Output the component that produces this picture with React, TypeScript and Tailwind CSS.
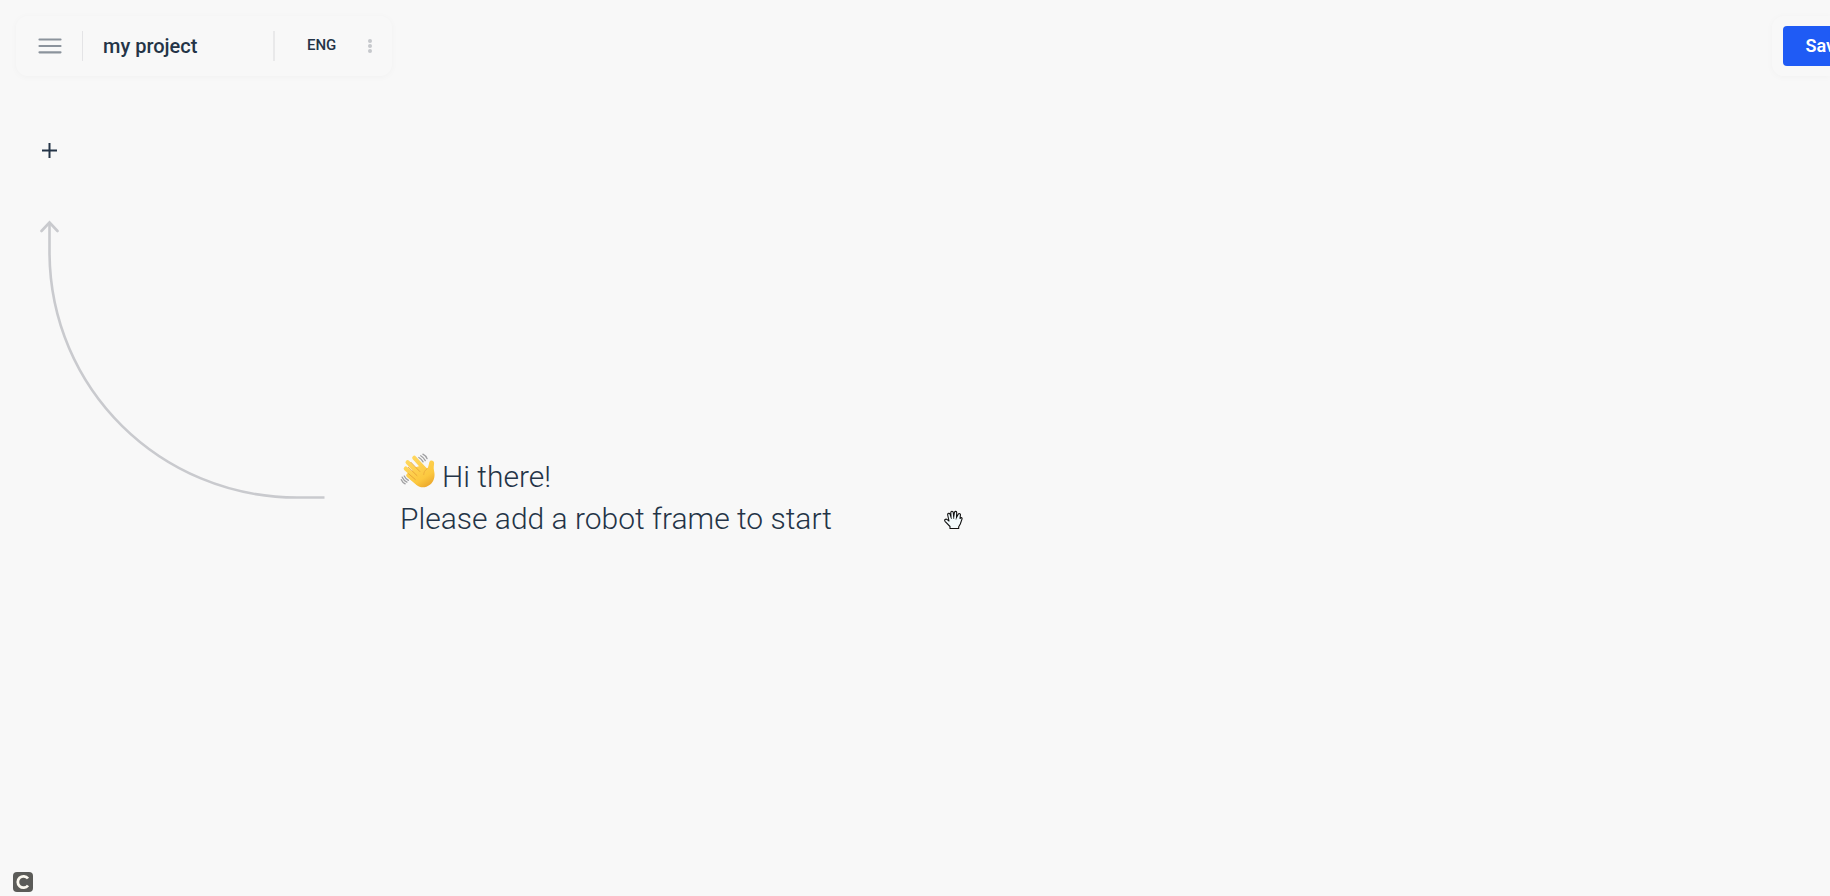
import React from 'react'

function MenuIcon() {
  return (
    <svg className="h-6 w-6" viewBox="0 0 24 24" fill="none" stroke="#8b939c" strokeWidth="2.2" strokeLinecap="round" aria-hidden="true">
      <path d="M1.5 5.5h21M1.5 12h21M1.5 18.3h21" />
    </svg>
  )
}

function DotsIcon() {
  return (
    <svg className="h-4 w-1" viewBox="0 0 4 16" fill="#c6c8cc" aria-hidden="true">
      <circle cx="2" cy="3" r="2" />
      <circle cx="2" cy="8" r="2" />
      <circle cx="2" cy="13" r="2" />
    </svg>
  )
}

function PlusIcon() {
  return (
    <svg className="h-4 w-4" viewBox="0 0 16 16" fill="none" stroke="#243447" strokeWidth="2" aria-hidden="true">
      <path d="M0 8.5h15M7.5 1v15" />
    </svg>
  )
}

function Arrow() {
  return (
    <svg className="h-[280px] w-[285px] shrink-0" viewBox="0 0 285 280" fill="none" stroke="#c9cace" strokeWidth="2.6" aria-hidden="true">
      <path d="M1.5 12L9.5 3.5l8 8.5" strokeLinecap="round" />
      <path d="M9.5 3.5v29C9.5 170 121 278.500 257 278.500h27.500" />
    </svg>
  )
}

function WaveIcon() {
  return (
    <svg className="-mt-3 h-9 w-9" viewBox="0 0 36 36" fill="none" strokeLinecap="round" aria-hidden="true">
      <defs>
        <linearGradient id="skin" x1="10" y1="6" x2="28" y2="34" gradientUnits="userSpaceOnUse">
          <stop stopColor="#ffd75e" />
          <stop offset="0.7" stopColor="#fcc83f" />
          <stop offset="1" stopColor="#eba62c" />
        </linearGradient>
      </defs>
      <path d="M18.800 4.500c1.900 1 3.300 2.500 4.300 4.400M20.700 2.700c2 1.100 3.600 2.800 4.600 4.900M22.900 1.200c1.900 1 3.400 2.600 4.200 4.500M4.200 23c.9 1.900 2.300 3.300 4.200 4.300M2.200 24.200c1 2.200 2.600 3.800 4.700 4.900M1.300 26.700c.8 1.900 2.100 3.200 3.900 4.100" stroke="#a0a0a2" strokeWidth="1.300" />
      <path d="M14.300 4.800L24 15.500M7.600 9.300L19 21M5.800 15.600L17 25.500M8.300 22.300L17 29.500" stroke="url(#skin)" strokeWidth="4.200" />
      <path d="M13 15l10-3c1.500 1.400 3 2.600 4.500 3.400.9-1.700 1.400-3.800 1.700-5.900.5-3.100 5.100-2.500 4.900.5-.1 2.600-.8 5 0 8 1.400 6-.5 11-4.200 13.800-4.200 3.200-9.500 3.500-13.400.2L10 26z" fill="url(#skin)" />
      <path d="M10.900 9.300l8.900 9.200M8.300 14.200l8.700 8.400M8.500 20.700l6.800 5.800" stroke="#e6a134" strokeWidth="0.900" />
      <path d="M27.300 15.600c-2.300 1.500-3.500 3.500-3.600 6" stroke="#eba93a" strokeWidth="0.800" />
    </svg>
  )
}

function HandCursor() {
  return (
    <svg className="absolute left-[944px] top-[510px] h-5 w-[19px]" viewBox="0 0 19 20" fill="#f3fafc" stroke="#111" strokeWidth="1.1" strokeLinejoin="round" aria-hidden="true">
      <path d="M6 18.500v-2L1 11.300c-1-1.500.7-2.800 2.200-1.700L5 11 3.700 5c-.3-1.900 1.800-2.300 2.400-.6L7 7l-.2-4.300c0-1.900 2.300-1.900 2.500 0L9.700 7l.7-4.500c.3-1.700 2.400-1.400 2.300.3L12.500 7.500l1.700-3.200c.8-1.400 2.600-.6 2.200.9L16 8.500c1.400-1.500 2.500-.8 1.900.9L16.300 14l-1.600 2.700v1.800z" />
      <path d="M7 7l.5 2M9.700 7v2M12.500 7.500L12 9.500" fill="none" strokeWidth="0.7" />
    </svg>
  )
}

export default function App() {
  return (
    <div className="relative flex h-screen flex-col overflow-hidden bg-[#f8f8f8] font-[Roboto,sans-serif] text-[#243447]">
      <header className="flex justify-between pl-4 pt-4">
        <div className="flex h-[60px] items-center rounded-xl pl-[22px] pr-5 shadow-[0_1px_7px_rgba(0,0,0,0.03)]">
          <button type="button" aria-label="Menu">
            <MenuIcon />
          </button>
          <div className="ml-5 h-[30px] w-px bg-[#e4e4e6]" />
          <input type="text" aria-label="Project name" defaultValue="my project" className="ml-5 w-[170px] bg-transparent text-xl font-medium outline-none" />
          <div className="h-[30px] w-0.5 bg-[#e9e9ea]" />
          <button type="button" className="ml-8 pb-0.5 text-[15px] font-medium">ENG</button>
          <button type="button" aria-label="More" className="ml-8">
            <DotsIcon />
          </button>
        </div>
        <div className="flex h-[60px] w-[58px] items-center rounded-l-xl pl-[11px] shadow-[0_1px_7px_rgba(0,0,0,0.03)]">
          <button type="button" className="h-10 w-[84px] shrink-0 rounded bg-[#1f5bf5] text-lg font-semibold text-white">Save</button>
        </div>
      </header>

      <main className="flex-1">
        <button type="button" aria-label="Add frame" className="ml-[42px] mt-[66px] block">
          <PlusIcon />
        </button>
        <div className="ml-10 mt-[61px] flex items-end">
          <Arrow />
          <h1 className="-mb-[41px] ml-[75px] text-3xl/[42px] font-light">
            <span className="flex items-center gap-1.5">
              <WaveIcon />
              Hi there!
            </span>
            Please add a robot frame to start
          </h1>
        </div>
      </main>

      <footer className="px-[13px] pb-1">
        <svg className="h-5 w-5" viewBox="0 0 20 20" role="img" aria-label="C">
          <rect width="20" height="20" rx="4" fill="#5b5b58" />
          <path d="M15 6.500A5.700 5.700 0 1 0 15 13.500" fill="none" stroke="#fbf8ef" strokeWidth="2.8" />
        </svg>
      </footer>
      <HandCursor />
    </div>
  )
}
